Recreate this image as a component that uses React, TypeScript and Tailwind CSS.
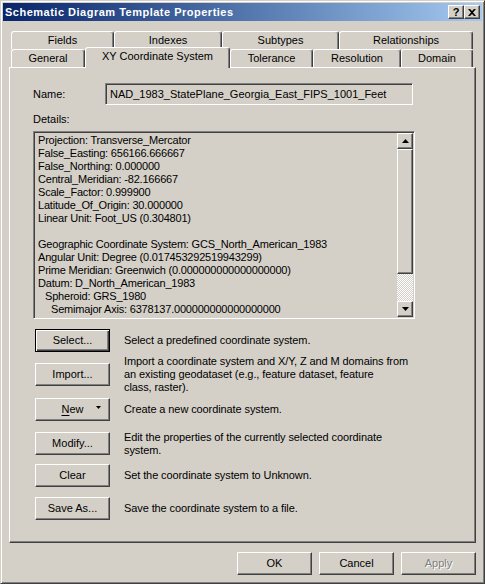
import React from "react";

const font = "font-['Liberation_Sans',Arial,sans-serif]";
const raised =
  "border border-t-white border-l-white border-r-[#404040] border-b-[#404040] shadow-[inset_-1px_-1px_#808080]";
const sunken =
  "border border-t-[#808080] border-l-[#808080] border-r-white border-b-white shadow-[inset_1px_1px_#404040]";

const details: { text: string; indent?: string }[] = [
  { text: "Projection: Transverse_Mercator" },
  { text: "False_Easting: 656166.666667" },
  { text: "False_Northing: 0.000000" },
  { text: "Central_Meridian: -82.166667" },
  { text: "Scale_Factor: 0.999900" },
  { text: "Latitude_Of_Origin: 30.000000" },
  { text: "Linear Unit: Foot_US (0.304801)" },
  { text: "" },
  { text: "Geographic Coordinate System: GCS_North_American_1983" },
  { text: "Angular Unit: Degree (0.017453292519943299)" },
  { text: "Prime Meridian: Greenwich (0.000000000000000000)" },
  { text: "Datum: D_North_American_1983" },
  { text: "Spheroid: GRS_1980", indent: "pl-[7px]" },
  { text: "Semimajor Axis: 6378137.000000000000000000", indent: "pl-[13px]" },
];

function Button({
  children,
  isDefault,
  disabled,
}: {
  children: React.ReactNode;
  isDefault?: boolean;
  disabled?: boolean;
}) {
  const frame = isDefault
    ? "border border-black shadow-[inset_1px_1px_#fff,inset_-1px_-1px_#404040,inset_-2px_-2px_#808080]"
    : raised;
  return (
    <button
      className={`${frame} w-[75px] h-[23px] shrink-0 flex items-center justify-center bg-[#d4d0c8] text-[11px] ${
        disabled ? "text-[#808080] [text-shadow:1px_1px_#fff]" : "text-black"
      }`}
    >
      {children}
    </button>
  );
}

function Arrow({ down }: { down?: boolean }) {
  return (
    <svg width="7" height="4" viewBox="0 0 7 4">
      <path d={down ? "M0 0h7L3.5 4z" : "M3.5 0L7 4H0z"} fill="#000" />
    </svg>
  );
}

function Tab({ label, width, selected }: { label: string; width: string; selected?: boolean }) {
  return (
    <div
      className={`${width} ${
        selected ? "h-[21px] -mb-px relative z-10 pb-[3px]" : "h-[18px]"
      } shrink-0 flex items-center justify-center bg-[#d4d0c8] border-t border-l border-r border-t-white border-l-white border-r-[#404040] shadow-[inset_-1px_0_#808080] rounded-t-[3px] text-[11px] text-black`}
    >
      {label}
    </div>
  );
}

function ActionRow({
  button,
  mt,
  lines,
  isDefault,
}: {
  button: React.ReactNode;
  mt: string;
  lines: string[];
  isDefault?: boolean;
}) {
  return (
    <div className={`${mt} ml-[2px] h-[23px] flex items-center gap-[14px]`}>
      <Button isDefault={isDefault}>{button}</Button>
      <div className="text-[11px] leading-[13px] tracking-[-0.1px] text-black whitespace-nowrap">
        {lines.map((l) => (
          <div key={l}>{l}</div>
        ))}
      </div>
    </div>
  );
}

export default function App() {
  return (
    <div
      className={`${font} w-[485px] h-[584px] bg-[#d4d0c8] border border-t-[#d4d0c8] border-l-[#d4d0c8] border-r-[#404040] border-b-[#404040] shadow-[inset_1px_1px_#fff,inset_-1px_-1px_#808080] p-[2px] select-none`}
    >
      {/* title bar */}
      <div className="h-[18px] flex items-center justify-between pl-[2px] pr-[2px] bg-gradient-to-r from-[#0a246a] to-[#a6caf0]">
        <span className="text-white font-bold text-[11px] tracking-[0.5px]">
          Schematic Diagram Template Properties
        </span>
        <div className="flex">
          <div className={`${raised} w-[16px] h-[14px] flex items-center justify-center bg-[#d4d0c8] text-[11px] font-bold leading-none text-black`}>
            ?
          </div>
          <div className={`${raised} w-[16px] h-[14px] flex items-center justify-center bg-[#d4d0c8]`}>
            <svg width="8" height="7" viewBox="0 0 8 7">
              <path d="M0 0h2l2 2 2-2h2L5 3.5 8 7H6L4 5 2 7H0l3-3.5z" fill="#000" />
            </svg>
          </div>
        </div>
      </div>

      <div className="ml-[6px]">
        {/* tabs */}
        <div className="mt-[10px] ml-[2px]">
          <div className="flex">
            <Tab label="Fields" width="w-[103px]" />
            <Tab label="Indexes" width="w-[108px]" />
            <Tab label="Subtypes" width="w-[117px]" />
            <Tab label="Relationships" width="w-[134px]" />
          </div>
          <div className="flex items-end h-[18px]">
            <Tab label="General" width="w-[74px]" />
            <Tab label="XY Coordinate System" width="w-[145px]" selected />
            <Tab label="Tolerance" width="w-[83px]" />
            <Tab label="Resolution" width="w-[88px]" />
            <Tab label="Domain" width="w-[72px]" />
          </div>
        </div>

        {/* page */}
        <div className="w-[467px] h-[476px] border border-t-white border-l-white border-r-[#404040] border-b-[#404040] shadow-[inset_-1px_-1px_#808080] pl-[23px] pt-[15px]">
          <div className="flex items-center h-[22px]">
            <span className="w-[72px] text-[11px] text-black">Name:</span>
            <div className={`${sunken} w-[308px] h-[22px] flex items-center pl-[4px] text-[11px] text-black`}>
              NAD_1983_StatePlane_Georgia_East_FIPS_1001_Feet
            </div>
          </div>
          <div className="mt-[8px] h-[13px] leading-[13px] text-[11px] text-black">Details:</div>
          <div className={`${sunken} mt-[5px] w-[382px] h-[188px] flex`}>
            <div className="flex-1 overflow-hidden pl-[4px] pt-[2px] text-[11px] leading-[13px] tracking-[-0.2px] text-black">
              {details.map((d, i) => (
                <div key={i} className={`h-[13px] whitespace-nowrap ${d.indent ?? ""}`}>
                  {d.text}
                </div>
              ))}
            </div>
            <div className="w-[16px] mt-px mr-px flex flex-col">
              <div className={`${raised} h-[16px] flex items-center justify-center bg-[#d4d0c8]`}>
                <Arrow />
              </div>
              <div className={`${raised} h-[125px] bg-[#d4d0c8]`} />
              <div className="flex-1 bg-[repeating-conic-gradient(#fff_0%_25%,#d4d0c8_0%_50%)] bg-[length:2px_2px]" />
              <div className={`${raised} h-[16px] flex items-center justify-center bg-[#d4d0c8] mb-px`}>
                <Arrow down />
              </div>
            </div>
          </div>

          <ActionRow
            mt="mt-[10px]"
            isDefault
            button="Select..."
            lines={["Select a predefined coordinate system."]}
          />
          <ActionRow
            mt="mt-[11px]"
            button="Import..."
            lines={[
              "Import a coordinate system and X/Y, Z and M domains from",
              "an existing geodataset (e.g., feature dataset, feature",
              "class, raster).",
            ]}
          />
          <div className="mt-[12px] ml-[2px] h-[23px] flex items-center gap-[14px]">
            <Button>
              <span className="relative w-full flex items-center justify-center">
                <span>
                  <span className="underline underline-offset-2">N</span>ew
                </span>
                <span className="absolute right-[8px] top-[5px]">
                  <svg width="5" height="3" viewBox="0 0 5 3">
                    <path d="M0 0h5L2.5 3z" fill="#000" />
                  </svg>
                </span>
              </span>
            </Button>
            <span className="text-[11px] tracking-[-0.1px] text-black">Create a new coordinate system.</span>
          </div>
          <ActionRow
            mt="mt-[11px]"
            button="Modify..."
            lines={["Edit the properties of the currently selected coordinate", "system."]}
          />
          <ActionRow mt="mt-[9px]" button="Clear" lines={["Set the coordinate system to Unknown."]} />
          <ActionRow mt="mt-[10px]" button="Save As..." lines={["Save the coordinate system to a file."]} />
        </div>

        {/* dialog buttons */}
        <div className="mt-[9px] w-[467px] flex justify-end gap-[7px]">
          <Button>OK</Button>
          <Button>Cancel</Button>
          <Button disabled>Apply</Button>
        </div>
      </div>
    </div>
  );
}
